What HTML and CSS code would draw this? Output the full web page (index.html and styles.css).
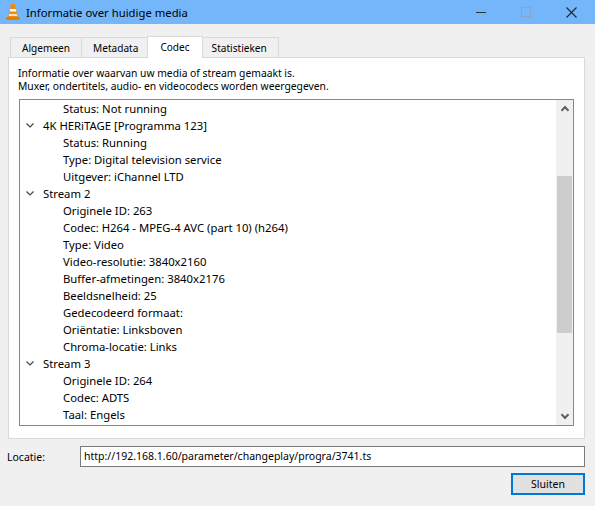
FILE: index.html
```html
<!DOCTYPE html>
<html lang="nl">
<head>
    <meta charset="UTF-8">
    <title>Informatie over huidige media</title>
    <link rel="stylesheet" href="styles.css">
</head>
<body>
    <div class="window">
        <div class="titlebar">
            <svg class="app-icon" width="16" height="18" viewBox="0 0 16 18">
                <path d="M6.2 1 L9.8 1 L13 14 L3 14 Z" fill="#f08a0c"/>
                <path d="M5.3 6 L10.7 6 L11.3 8.6 L4.7 8.6 Z" fill="#fff"/>
                <path d="M4.2 11 L11.8 11 L12.3 13 L3.7 13 Z" fill="#fbe3c4"/>
                <path d="M1 14 L15 14 L15 16.5 Q8 17.5 1 16.5 Z" fill="#e67d00"/>
            </svg>
            <span class="title">Informatie over huidige media</span>
            <div class="controls">
                <span class="ctrl"><svg width="10" height="10" viewBox="0 0 10 10"><path d="M0 5.5 H10" stroke="#333" stroke-width="1"/></svg></span>
                <span class="ctrl"><svg width="10" height="10" viewBox="0 0 10 10"><rect x="0.5" y="0.5" width="9" height="9" fill="none" stroke="#8aa5c4" stroke-width="1"/></svg></span>
                <span class="ctrl"><svg width="11" height="11" viewBox="0 0 11 11"><path d="M0.5 0.5 L10.5 10.5 M10.5 0.5 L0.5 10.5" stroke="#222" stroke-width="1.1"/></svg></span>
            </div>
        </div>

        <div class="content">
            <div class="tabs">
                <div class="tab">Algemeen</div>
                <div class="tab">Metadata</div>
                <div class="tab active">Codec</div>
                <div class="tab">Statistieken</div>
            </div>
            <div class="panel">
                <p class="intro">Informatie over waarvan uw media of stream gemaakt is.<br>Muxer, ondertitels, audio- en videocodecs worden weergegeven.</p>
                <div class="tree">
                    <div class="tree-rows">
                        <div class="row item">Status: Not running</div>
                        <div class="row group"><svg class="chev" width="8" height="5" viewBox="0 0 8 5"><path d="M0.5 0.5 L4 4 L7.5 0.5" fill="none" stroke="#444" stroke-width="1.2"/></svg>4K HERiTAGE [Programma 123]</div>
                        <div class="row item">Status: Running</div>
                        <div class="row item">Type: Digital television service</div>
                        <div class="row item">Uitgever: iChannel LTD</div>
                        <div class="row group"><svg class="chev" width="8" height="5" viewBox="0 0 8 5"><path d="M0.5 0.5 L4 4 L7.5 0.5" fill="none" stroke="#444" stroke-width="1.2"/></svg>Stream 2</div>
                        <div class="row item">Originele ID: 263</div>
                        <div class="row item">Codec: H264 - MPEG-4 AVC (part 10) (h264)</div>
                        <div class="row item">Type: Video</div>
                        <div class="row item">Video-resolutie: 3840x2160</div>
                        <div class="row item">Buffer-afmetingen: 3840x2176</div>
                        <div class="row item">Beeldsnelheid: 25</div>
                        <div class="row item">Gedecodeerd formaat:</div>
                        <div class="row item">Oriëntatie: Linksboven</div>
                        <div class="row item">Chroma-locatie: Links</div>
                        <div class="row group"><svg class="chev" width="8" height="5" viewBox="0 0 8 5"><path d="M0.5 0.5 L4 4 L7.5 0.5" fill="none" stroke="#444" stroke-width="1.2"/></svg>Stream 3</div>
                        <div class="row item">Originele ID: 264</div>
                        <div class="row item">Codec: ADTS</div>
                        <div class="row item">Taal: Engels</div>
                    </div>
                    <div class="scrollbar">
                        <span class="arrow up"></span>
                        <div class="track"><div class="thumb"></div></div>
                        <span class="arrow down"></span>
                    </div>
                </div>
            </div>

            <div class="location">
                <label>Locatie:</label>
                <div class="field">http://192.168.1.60/parameter/changeplay/progra/3741.ts</div>
            </div>
            <div class="buttons">
                <button class="btn">Sluiten</button>
            </div>
        </div>
    </div>
</body>
</html>
```

FILE: styles.css
```css
body {
    margin: 0;
    font-family: 'Noto Sans', 'Open Sans', sans-serif;
    font-size: 10.5px;
    color: #000;
    background-color: #f0f0f0;
}
.window {
    width: 595px;
    height: 506px;
    overflow: hidden;
}
.titlebar {
    height: 24px;
    background-color: #73b7fa;
    display: flex;
    align-items: center;
}
.app-icon {
    margin-left: 5px;
    margin-right: 5px;
}
.title {
    font-size: 11.3px;
}
.controls {
    margin-left: auto;
    display: flex;
    height: 100%;
}
.ctrl {
    width: 45px;
    display: flex;
    align-items: center;
    justify-content: center;
}
.ctrl:last-child {
    width: 47px;
}
.content {
    padding: 0 10px 0 7px;
}
.tabs {
    display: flex;
    align-items: flex-end;
    height: 33px;
    padding-left: 3px;
    font-size: 10.1px;
}
.tab {
    height: 19px;
    line-height: 20px;
    padding: 0 11px;
    background-color: #f0f0f0;
    border: 1px solid #d9d9d9;
    border-bottom: none;
    margin-right: -1px;
}
.tab.active {
    position: relative;
    height: 21px;
    line-height: 21px;
    background-color: #fff;
    margin-left: -2px;
    margin-right: -2px;
    padding: 0 12px;
    margin-bottom: -1px;
    z-index: 1;
}
.tab.active + .tab {
    border-left: none;
}
.panel {
    background-color: #fff;
    border: 1px solid #d9d9d9;
    margin-left: 1px;
    height: 380px;
    padding: 0 10px 0 9px;
}
.intro {
    margin: 9px 0 6px;
    line-height: 13px;
    font-size: 10.3px;
}
.tree {
    display: flex;
    height: 325px;
    margin-left: 1px;
    border: 1px solid #828790;
    font-size: 11.3px;
}
.tree-rows {
    flex: 1;
}
.row {
    height: 17px;
    line-height: 17px;
    white-space: nowrap;
    display: flex;
    align-items: center;
}
.row.item {
    padding-left: 43px;
}
.row.group {
    padding-left: 6px;
}
.chev {
    margin-right: 9px;
}
.scrollbar {
    width: 17px;
    background-color: #f0f0f0;
    display: flex;
    flex-direction: column;
}
.arrow {
    height: 17px;
    display: flex;
    align-items: center;
    justify-content: center;
}
.arrow::before {
    content: "";
    width: 4px;
    height: 4px;
    border-left: 2px solid #606060;
    border-top: 2px solid #606060;
}
.arrow.up::before {
    transform: rotate(45deg);
    margin-top: 3px;
}
.arrow.down::before {
    transform: rotate(-135deg);
    margin-top: -3px;
}
.track {
    flex: 1;
    padding-top: 59px;
}
.thumb {
    height: 157px;
    margin: 0 1px;
    background-color: #cdcdcd;
}
.location {
    display: flex;
    align-items: center;
    margin-top: 7px;
}
.location label {
    width: 73px;
}
.field {
    flex: 1;
    height: 19px;
    line-height: 19px;
    border: 1px solid #7a7a7a;
    background-color: #fff;
    padding-left: 3px;
}
.buttons {
    display: flex;
    justify-content: flex-end;
    margin-top: 6px;
}
.btn {
    width: 74px;
    height: 22px;
    font-family: inherit;
    font-size: 10.5px;
    background-color: #e1e1e1;
    border: 2px solid #0078d7;
    padding: 0;
}
```
